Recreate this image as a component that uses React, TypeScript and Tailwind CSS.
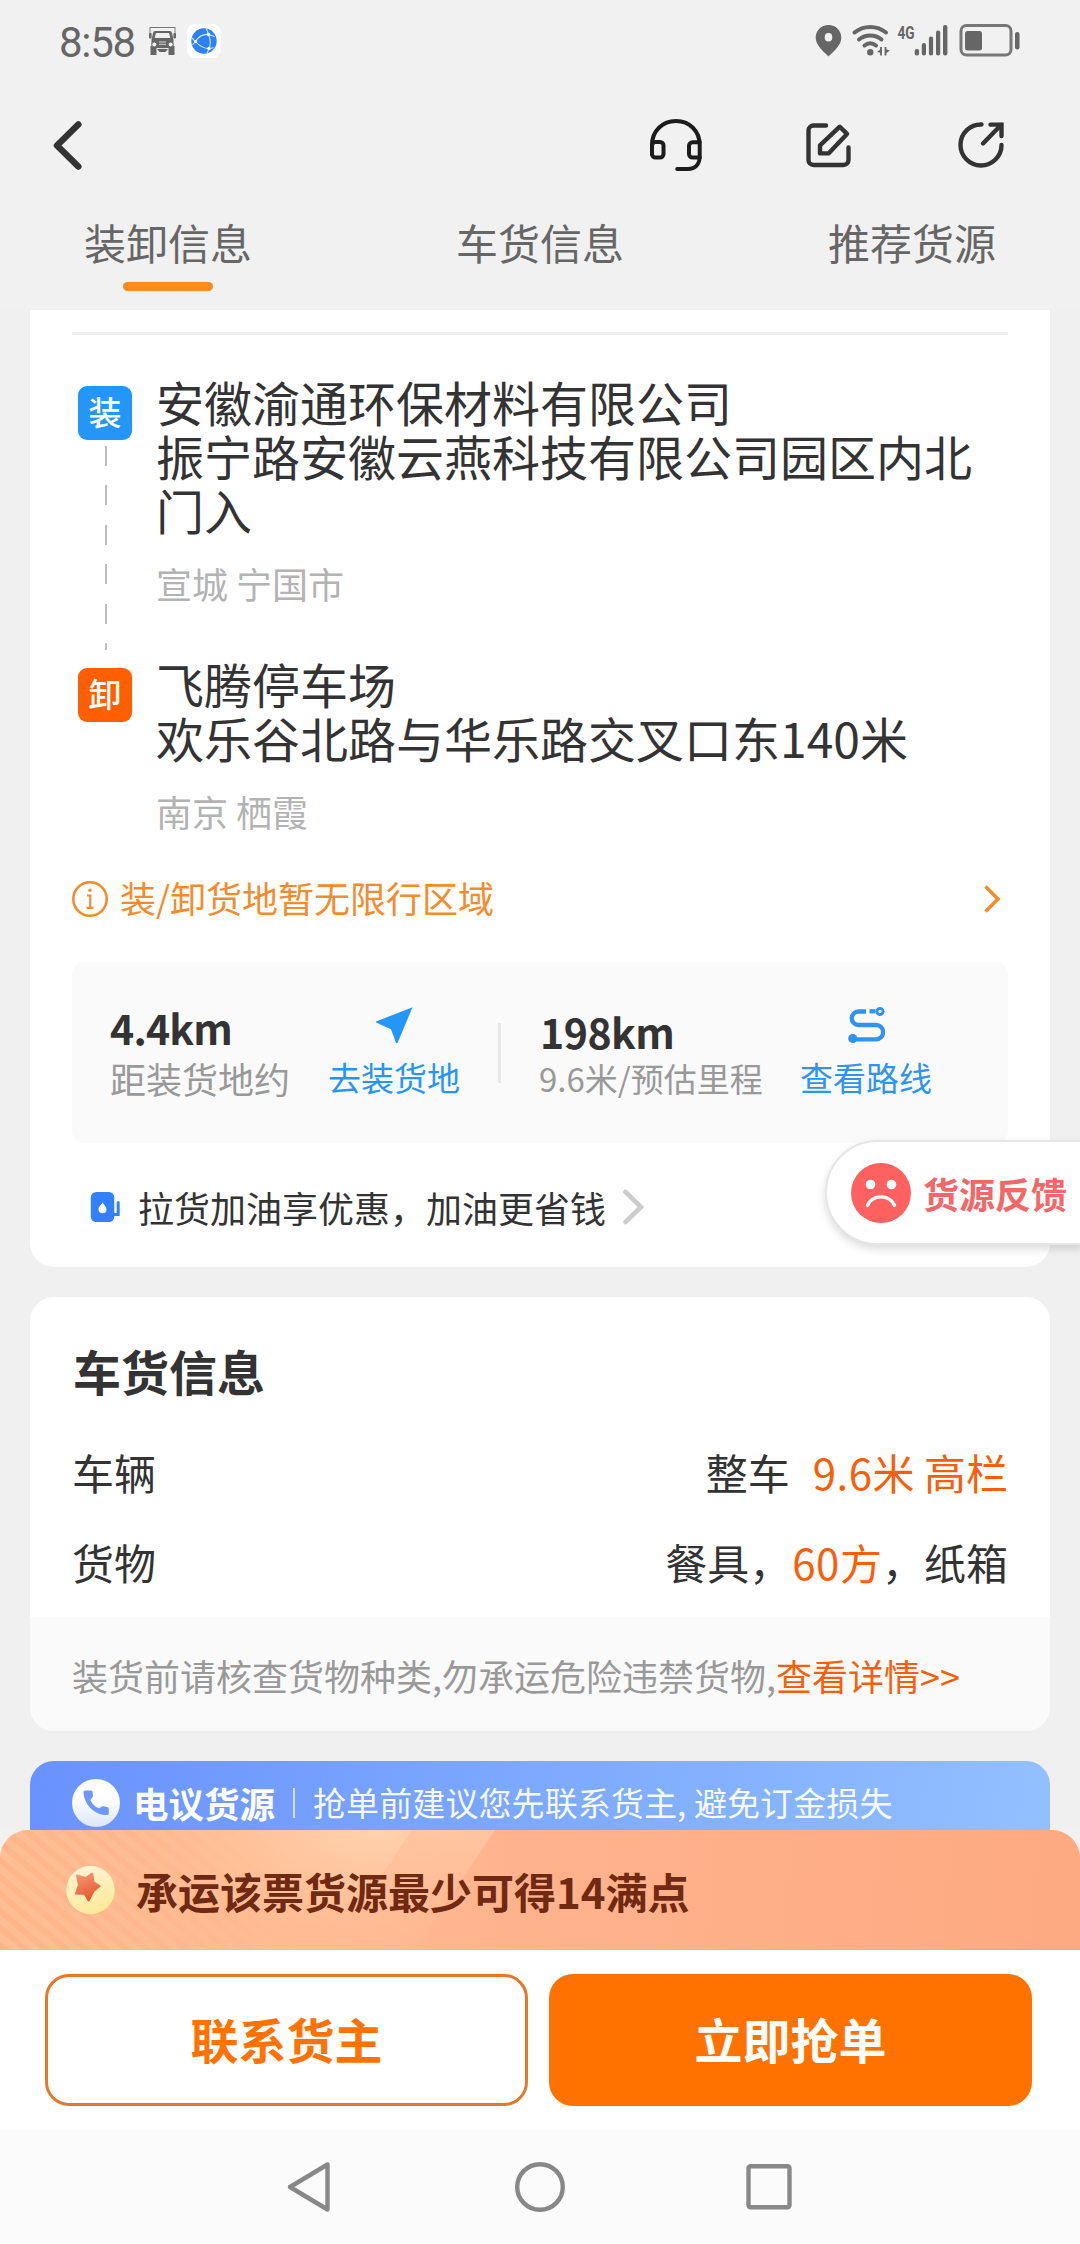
import React from "react";

const TABS = ["装卸信息", "车货信息", "推荐货源"];

function TruckIcon() {
  return (
    <svg className="h-[30px] w-[27px]" viewBox="0 0 27 30" fill="#666">
      <path d="M1 1v10M26 1v10" stroke="#666" strokeWidth="0.8" />
      <path d="M1 1.500h25" stroke="#777" strokeWidth="1" />
      <path d="M6 5h15q1.500 0 2 2l1.500 7v8H2.500v-8L4 7q.5-2 2-2z" />
      <path d="M7.500 7h12q.6 0 .8.800l1 4.200H5.700l1-4.200q.2-.8.8-.8z" fill="#f1f1f1" />
      <rect x="0" y="7" width="2.600" height="5.500" rx="1" />
      <rect x="24.400" y="7" width="2.600" height="5.500" rx="1" />
      <path d="M1.500 20h6v9h-6zM19.500 20h6v9h-6z" />
      <path d="M8 23h11l-2.500 3h-6z" />
      <circle cx="5.300" cy="18.500" r="2.500" fill="#f1f1f1" stroke="#666" />
      <circle cx="21.700" cy="18.500" r="2.500" fill="#f1f1f1" stroke="#666" />
      <path d="M10 16h7M10 18.300h7M9.500 22.500h8" stroke="#ddd" strokeWidth="0.900" />
    </svg>
  );
}

function GlobeIcon() {
  return (
    <svg className="h-[34px] w-[34px]" viewBox="0 0 34 34">
      <rect width="34" height="34" rx="8" fill="#fff" />
      <circle cx="17" cy="17" r="12.700" fill="#2f80f5" />
      <g stroke="#cfe3ff" strokeWidth="1.100" fill="none">
        <path d="M8.500 17.500C12 12 17 10 21.500 10.500C24 16 23.500 21 22 25C17 24 12 22 8.500 17.500zM21.500 10.500L19.500 4.800M21.500 10.500l6 2M22 25l-2 4M22 25l4.500-1.500M8.500 17.500L5 14M8.500 17.500L5.500 21" />
      </g>
      <circle cx="8.500" cy="17.500" r="1.500" fill="#fff" />
      <circle cx="21.500" cy="10.500" r="1.700" fill="#fff" />
      <circle cx="22" cy="24.500" r="1.700" fill="#fff" />
    </svg>
  );
}

function StatusBar() {
  return (
    <div className="flex h-[84px] items-start">
      <div className="ml-[59px] mt-[18px] w-[90px] font-['Roboto'] text-[42px] leading-[49px] tracking-[-1.3px] text-[#666]">8:58</div>
      <div className="mt-[26px] w-[38px]">
        <TruckIcon />
      </div>
      <div className="mt-[24px]">
        <GlobeIcon />
      </div>
      <svg className="ml-auto mr-[60px] mt-[20px] h-[40px] w-[208px]" viewBox="812 20 208 40" fill="#666">
        <path fillRule="evenodd" d="M828.500 25c-7.300 0-12.800 5.500-12.800 12.600 0 7.600 7 13.400 12.800 18.800 5.800-5.400 12.800-11.200 12.800-18.800 0-7.100-5.500-12.600-12.800-12.600zm0 8a3.800 4.300 0 1 1 0 8.600 3.800 4.300 0 1 1 0-8.600z" />
        <g fill="none" stroke="#666" strokeWidth="4" strokeLinecap="round">
          <path d="M854.500 32.500c9-7.500 22.500-7.500 31.500 0M859 39.500c6.500-5.300 16-5.300 22.500 0M864.500 45.500c3.500-2.700 8-2.700 11.500 0" />
        </g>
        <circle cx="870.300" cy="52.300" r="3.200" />
        <path d="M881 47v8.500M885.500 47v8.500" stroke="#666" strokeWidth="1.800" />
        <path d="M877 52l4.500-3.500v4.500zM889.800 50.500l-4.500 3.500v-5z" />
        <text x="897.500" y="38.500" fontFamily="Roboto" fontSize="18" fontWeight="700" textLength="17" lengthAdjust="spacingAndGlyphs">4G</text>
        <rect x="914.700" y="49" width="4.400" height="6.500" rx="2" />
        <rect x="921.800" y="43" width="4.200" height="12.500" rx="2" />
        <rect x="928.900" y="36.500" width="4.200" height="19" rx="2" />
        <rect x="936" y="30.500" width="4.200" height="25" rx="2" />
        <rect x="943" y="25" width="4.400" height="30.500" rx="2" />
        <rect x="961" y="25.500" width="50" height="29.500" rx="5.500" fill="none" stroke="#777" strokeWidth="3" />
        <rect x="965" y="31" width="17" height="19.500" rx="2.500" />
        <rect x="1015" y="32" width="4.500" height="17.500" rx="2.200" />
      </svg>
    </div>
  );
}

function NavBar() {
  return (
    <div className="flex h-[122px] items-start pl-[48px]">
      <svg className="mt-[32px] h-[60px] w-[40px]" viewBox="48 116 40 60" fill="none" stroke="#333" strokeWidth="6.500" strokeLinecap="round" strokeLinejoin="round">
        <path d="M78.300 124.500L57 145.500l21.300 21" />
      </svg>
      <svg className="ml-auto mt-[30px] h-[60px] w-[60px]" viewBox="646 114 60 60" fill="none" stroke="#1c1c1c" strokeWidth="4" strokeLinecap="round" strokeLinejoin="round">
        <path d="M652 154v-9c0-14 10.500-24 24-24s23.700 10 23.700 24v11c0 8.500-4.500 13-12 13h-10.500" />
        <rect x="652" y="142" width="11.500" height="15.500" rx="3.500" />
        <path d="M699.700 142.300h-7.200a3.500 3.500 0 0 0-3.500 3.500v8.200a3.500 3.500 0 0 0 3.500 3.500h7.200" />
      </svg>
      <svg className="ml-[94px] mt-[32px] h-[56px] w-[56px]" viewBox="800 116 56 56" fill="none" stroke="#333" strokeWidth="4.400" strokeLinecap="round" strokeLinejoin="round">
        <path d="M826 125.500h-12.500a5 5 0 0 0-5 5v29.500a5 5 0 0 0 5 5h30a5 5 0 0 0 5-5v-12.500" />
        <path d="M839.800 126.700l7.200 7.200-18.500 19.500h-8.500v-8z" />
      </svg>
      <svg className="mr-[70px] ml-[98px] mt-[32px] h-[56px] w-[56px]" viewBox="954 116 56 56" fill="none" stroke="#333" strokeWidth="4.400" strokeLinecap="round">
        <path d="M981.500 124.500A20.500 20.500 0 1 0 1001.500 145" />
        <path d="M990.500 124.600h11v11.500" />
        <path d="M983 143.500l18-18.500" />
      </svg>
    </div>
  );
}

function Header() {
  return (
    <header>
      <StatusBar />
      <NavBar />
      <nav className="flex h-[104px] justify-between px-[84px]">
        {TABS.map((tab, i) => (
          <div key={tab} className="flex w-[168px] flex-col items-center pt-[6px] text-[42px] leading-[60px] text-[#666]">
            <span className="h-[70px] whitespace-nowrap">{tab}</span>
            {i === 0 && <span className="h-[9px] w-[90px] rounded-full bg-[#f98a1e]" />}
          </div>
        ))}
      </nav>
    </header>
  );
}

type StopProps = { name: string; address: string; city: string; tag: string; tagClass: string; dashed?: boolean };

function Stop({ name, address, city, tag, tagClass, dashed }: StopProps) {
  return (
    <div className="flex">
      <div className="ml-[48px] flex w-[54px] flex-col items-center pt-[12px]">
        <div className={`flex h-[54px] w-[54px] shrink-0 items-center justify-center rounded-[9px] pb-[3px] text-[33px] font-medium text-white ${tagClass}`}>{tag}</div>
        {dashed && (
          <div className="ml-[2px] mt-[6px] h-[204px] w-[2px] shrink-0 bg-[repeating-linear-gradient(180deg,#bdbdbd_0px,#bdbdbd_20px,transparent_20px,transparent_39.4px)]" />
        )}
      </div>
      <div className="ml-[24px] w-[830px]">
        <div className="text-[48px] leading-[54px] text-[#333]">{name}</div>
        <div className="text-[48px] leading-[54px] text-[#333]">{address}</div>
        <div className="mt-[20px] pb-[1px] text-[36px] leading-[54px] text-[#b3b3b3]">{city}</div>
      </div>
    </div>
  );
}

function Distances() {
  return (
    <div className="ml-[42px] mt-[39px] flex h-[181px] w-[936px] rounded-[12px] bg-[#fafafa] pl-[38px]">
      <div className="w-[218px] pt-[43px]">
        <div className="text-[41px] font-bold leading-[44px] tracking-[-0.8px] text-[#333]">4.4km</div>
        <div className="mt-[11px] text-[36px] leading-[36px] text-[#999]">距装货地约</div>
      </div>
      <div className="flex w-[132px] flex-col items-center pt-[45px]">
        <svg className="h-[36px] w-[37px]" viewBox="0 0 37 36" fill="#2496f8">
          <path d="M36.500 0.300L21.500 36q-.8 1-1.400 0L15 22.200 0.600 15.800q-1.200-.8 0-1.500z" />
        </svg>
        <div className="mt-[17px] text-[33px] leading-[34px] text-[#2496f8]">去装货地</div>
      </div>
      <div className="ml-[38px] mt-[61px] h-[60px] w-[3px] bg-[#e8e8e8]" />
      <div className="ml-[38px] w-[261px] pt-[47px]">
        <div className="pl-[1px] text-[41px] font-bold leading-[44px] tracking-[-0.5px] text-[#333]">198km</div>
        <div className="mt-[8px] whitespace-nowrap text-[33px] leading-[34px] text-[#999]">9.6米/预估里程</div>
      </div>
      <div className="flex w-[132px] flex-col items-center pt-[45px]">
        <svg className="h-[36px] w-[37px]" viewBox="0 0 37 36" fill="none" stroke="#2f94ee" strokeWidth="4.300">
          <path d="M18 4.500h-7.500a6.700 6.700 0 0 0 0 13.500h17.500a7 7 0 0 1 0 14.300H5" />
          <path d="M21.500 4.300h6" />
          <circle cx="32" cy="4.500" r="3.100" strokeWidth="2.900" />
          <circle cx="4.700" cy="31.500" r="4.500" fill="#2f94ee" stroke="none" />
        </svg>
        <div className="mt-[17px] text-[33px] leading-[34px] text-[#2f94ee]">查看路线</div>
      </div>
    </div>
  );
}

function RouteCard() {
  return (
    <section className="mx-[30px] h-[957px] rounded-b-[24px] bg-white pt-[22px]">
      <div className="mx-[42px] mb-[39px] h-[3px] bg-[#efefef]" />
      <Stop name="安徽渝通环保材料有限公司" address="振宁路安徽云燕科技有限公司园区内北门入" city="宣城 宁国市" tag="装" tagClass="bg-[#2496f8]" dashed />
      <div className="mt-[6px]">
        <Stop name="飞腾停车场" address="欢乐谷北路与华乐路交叉口东140米" city="南京 栖霞" tag="卸" tagClass="bg-[#ff5f00]" />
      </div>
      <div className="mt-[36px] flex h-[48px] items-center pl-[42px] pr-[49px]">
        <svg className="h-[36px] w-[36px]" viewBox="0 0 36 36" fill="none" stroke="#f28c2c" strokeWidth="2.600">
          <circle cx="18" cy="18" r="16.700" />
          <path d="M15 14.500h3.300v12M14.500 26.800h7" strokeWidth="2.200" />
          <circle cx="18" cy="9.300" r="1.700" fill="#f28c2c" stroke="none" />
        </svg>
        <div className="ml-[12px] pb-[4px] text-[36px] leading-[48px] text-[#f28c2c]">装/卸货地暂无限行区域</div>
        <svg className="ml-auto h-[30px] w-[18px]" viewBox="0 0 18 30" fill="none" stroke="#f28c2c" strokeWidth="3.600">
          <path d="M2.500 2.500L15 15 2.500 27.500" />
        </svg>
      </div>
      <Distances />
      <div className="flex h-[124px] items-center pl-[60px] pt-[4px]">
        <svg className="h-[30px] w-[30px]" viewBox="0 0 30 30">
          <rect x="0.800" width="23.500" height="30" rx="5.500" fill="#3380fc" />
          <path d="M12.500 10.500c3 4 4 5.300 4 7a4 3.700 0 0 1-8 0c0-1.700 1-3 4-7z" fill="#fff" />
          <path d="M24 22.500h4.200V10.500" fill="none" stroke="#3380fc" strokeWidth="3" strokeLinecap="round" />
        </svg>
        <div className="ml-[18px] text-[36px] leading-[48px] text-[#333]">拉货加油享优惠，加油更省钱</div>
        <svg className="ml-[15px] h-[36px] w-[24px]" viewBox="0 0 24 36" fill="none" stroke="#ccc" strokeWidth="4.600" strokeLinecap="round">
          <path d="M4.500 3L20 18 4.500 33" />
        </svg>
      </div>
    </section>
  );
}

function CargoCard() {
  return (
    <section className="mx-[30px] mt-[30px] h-[434px] overflow-hidden rounded-[24px] bg-white pt-[40px] text-[#333]">
      <div className="px-[43px] text-[48px] font-bold leading-[66px]">车货信息</div>
      <div className="mt-[39px] flex justify-between px-[42px] text-[42px] leading-[60px]">
        <span>车辆</span>
        <span>
          整车<span className="ml-[23px] text-[#f95f0a]"><span className="tracking-[0.5px]">9.6</span>米 高栏</span>
        </span>
      </div>
      <div className="mt-[30px] flex justify-between px-[42px] text-[42px] leading-[60px]">
        <span>货物</span>
        <span>
          餐具，<span className="ml-[1px] text-[#f95f0a]"><span className="tracking-[0.6px]">60</span>方</span>，纸箱
        </span>
      </div>
      <div className="mt-[25px] flex h-[114px] items-center bg-[#fafafa] px-[42px] pt-[2px] text-[36px] leading-[48px] text-[#999]">
        装货前请核查货物种类,勿承运危险违禁货物,<span className="text-[#f95f0a]">查看详情&gt;&gt;</span>
      </div>
    </section>
  );
}

function PhoneBanner() {
  return (
    <section className="mx-[30px] mt-[30px] flex h-[69px] items-start rounded-t-[24px] bg-[linear-gradient(100deg,#6992ff,#7ba7ff_45%,#92c0ff)] pl-[42px] text-white">
      <svg className="mt-[18px] h-[48px] w-[48px]" viewBox="0 0 48 48">
        <defs>
          <linearGradient id="disc" x1="0" y1="0" x2="0" y2="1">
            <stop offset="0.400" stopColor="#fff" />
            <stop offset="1" stopColor="#dbe6ff" />
          </linearGradient>
        </defs>
        <circle cx="24" cy="24" r="24" fill="url(#disc)" />
        <path d="M13 11.500h6q1.500 0 1.600 1.500l.4 4c.1 1.800-3 2.800-2.300 4.800 1.300 3.200 4.400 6 7.400 7.300 1.800.7 3-2 5-1.900l4 .8q1.700.4 1.700 2v4.500q0 1.500-1.500 1.500C22.500 36.500 11.700 25 11.500 13q0-1.500 1.500-1.500z" fill="#6d97fb" />
      </svg>
      <div className="ml-[13px] mt-[18px] text-[35.500px] font-bold leading-[48px]">电议货源</div>
      <div className="ml-[18px] mt-[27px] h-[30px] w-[2px] bg-white/70" />
      <div className="ml-[18px] mt-[17px] text-[33px] leading-[48px] tracking-[0.1px] text-white/95">抢单前建议您先联系货主, 避免订金损失</div>
    </section>
  );
}

function PointsBanner() {
  return (
    <div className="relative flex h-[120px] shrink-0 items-center overflow-hidden rounded-t-[28px] bg-[linear-gradient(95deg,#febd93_0%,#ffbb92_30%,#ffb38d_48%,#fda981_100%)] pl-[66px]">
      <svg className="absolute inset-0 h-[120px] w-[1080px]" viewBox="0 0 1080 120">
        <defs>
          <pattern id="stripes" width="13" height="13" patternUnits="userSpaceOnUse" patternTransform="rotate(-50)">
            <rect width="6" height="13" fill="#ffab7d" fillOpacity="0.400" />
          </pattern>
          <linearGradient id="fade" x1="0" x2="1">
            <stop offset="0" stopColor="#fff" />
            <stop offset="1" stopColor="#000" />
          </linearGradient>
          <mask id="left">
            <rect width="300" height="120" fill="url(#fade)" />
          </mask>
          <radialGradient id="glow" gradientUnits="userSpaceOnUse" cx="0" cy="0" r="1" gradientTransform="translate(375 0) scale(230 115)">
            <stop offset="0" stopColor="#ffd5b0" stopOpacity="0.950" />
            <stop offset="1" stopColor="#ffc6a0" stopOpacity="0" />
          </radialGradient>
          <linearGradient id="beam" x1="0" y1="0" x2="0" y2="1">
            <stop offset="0" stopColor="#ffcba8" stopOpacity="0.750" />
            <stop offset="1" stopColor="#ffc29b" stopOpacity="0.100" />
          </linearGradient>
        </defs>
        <rect width="300" height="120" fill="url(#stripes)" mask="url(#left)" />
        <path d="M0 0h412l-80 120H0z" fill="url(#glow)" />
        <path d="M412 0h83l-80 120h-83z" fill="url(#beam)" />
      </svg>
      <svg className="relative h-[50px] w-[50px]" viewBox="0 0 50 50">
        <defs>
          <linearGradient id="coin" x1="0.300" y1="0" x2="0.600" y2="1">
            <stop offset="0" stopColor="#fff3d4" />
            <stop offset="1" stopColor="#fdea98" />
          </linearGradient>
          <linearGradient id="star" x1="0.300" y1="0" x2="0.600" y2="1">
            <stop offset="0" stopColor="#f3946f" />
            <stop offset="1" stopColor="#e5562f" />
          </linearGradient>
        </defs>
        <circle cx="24.500" cy="25" r="24.200" fill="url(#coin)" />
        <path d="M26.200 8.500l1.300 8.500 6 4.300-6 4.700-4.800 9.500-4.200-6.700-8.500-.3 3-8.500L11 10.500l8.500 2.500z" fill="url(#star)" stroke="url(#star)" strokeWidth="2" strokeLinejoin="round" />
      </svg>
      <div className="relative ml-[20px] pt-[2px] text-[42px] font-bold leading-[60px] text-[#702912]">承运该票货源最少可得14满点</div>
    </div>
  );
}

function Actions() {
  return (
    <div className="flex h-[180px] shrink-0 gap-[21px] bg-white pl-[45px] pt-[24px] text-[48px] font-bold">
      <button className="h-[132px] w-[483px] rounded-[24px] border-[3px] border-[#e5782a] pb-[5px] text-[#ff7200]">联系货主</button>
      <button className="h-[132px] w-[483px] rounded-[24px] bg-[#ff7200] pb-[5px] text-white">立即抢单</button>
    </div>
  );
}

function SystemKeys() {
  return (
    <div className="flex h-[114px] shrink-0 items-center justify-center gap-[177px] bg-[#fbfbfb]">
      <svg className="h-[52px] w-[52px]" viewBox="0 0 52 52" fill="none" stroke="#888" strokeWidth="4.400" strokeLinejoin="round">
        <path d="M42.500 3.500v45L5 26z" />
      </svg>
      <svg className="h-[52px] w-[52px]" viewBox="0 0 52 52" fill="none" stroke="#888" strokeWidth="4.400">
        <circle cx="26" cy="26" r="22.800" />
      </svg>
      <svg className="h-[52px] w-[52px]" viewBox="0 0 52 52" fill="none" stroke="#888" strokeWidth="4.400">
        <rect x="5.500" y="5.200" width="41" height="41" rx="2" />
      </svg>
    </div>
  );
}

function FeedbackTab() {
  return (
    <div className="absolute right-[-3px] top-[1140px] flex h-[105px] w-[258px] items-center rounded-l-full border-[2px] border-[#e6e6e6] bg-white pl-[24px] shadow-[0_4px_8px_rgba(0,0,0,0.14)]">
      <svg className="h-[60px] w-[60px] shrink-0" viewBox="0 0 60 60">
        <circle cx="30" cy="30" r="30" fill="#ff6060" />
        <circle cx="19.500" cy="21.500" r="4.800" fill="#fff" />
        <circle cx="40.500" cy="21.500" r="4.800" fill="#fff" />
        <path d="M16.500 42.500c5-11.500 22-11.500 27 0" fill="none" stroke="#fff" strokeWidth="3.400" strokeLinecap="round" />
      </svg>
      <div className="ml-[12px] whitespace-nowrap text-[36px] font-bold leading-[48px] text-[#f26768]">货源反馈</div>
    </div>
  );
}

export default function App() {
  return (
    <div className="relative flex h-[2244px] w-[1080px] flex-col overflow-hidden bg-[#f1f1f1] font-['Noto_Sans_CJK_SC','Noto_Sans',sans-serif]">
      <Header />
      <main className="h-[1520px] shrink-0 overflow-hidden bg-[#f0f0f0]">
        <RouteCard />
        <CargoCard />
        <PhoneBanner />
      </main>
      <PointsBanner />
      <Actions />
      <SystemKeys />
      <FeedbackTab />
    </div>
  );
}
